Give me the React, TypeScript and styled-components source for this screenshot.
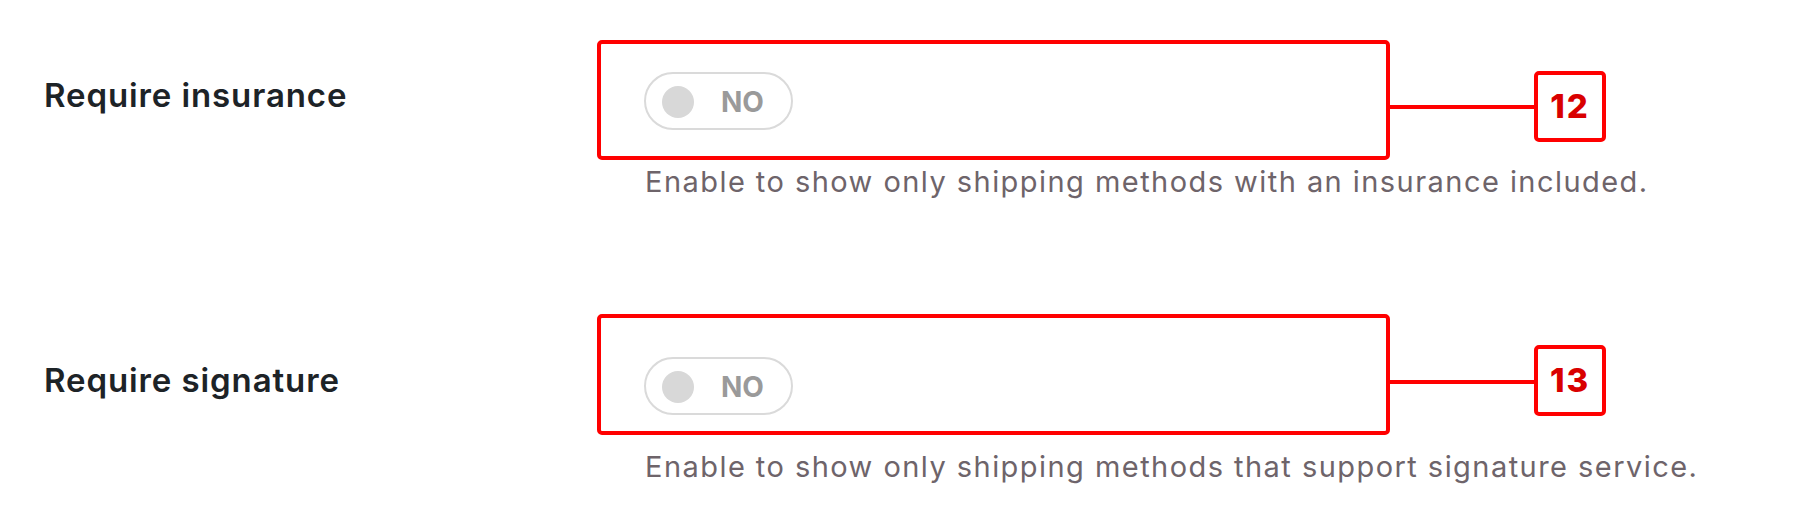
import React from 'react';
import styled, { createGlobalStyle } from 'styled-components';

const GlobalStyle = createGlobalStyle`
  html, body {
    margin: 0;
    padding: 0;
    background: #ffffff;
  }
  body {
    font-family: Inter, "Noto Sans", "Liberation Sans", sans-serif;
    -webkit-font-smoothing: antialiased;
  }
`;

const Page = styled.div`
  width: 1808px;
  height: 524px;
  box-sizing: border-box;
  padding: 72px 0 0 44px;
  display: flex;
  flex-direction: column;
  gap: 155px;
  overflow: hidden;
`;

const Row = styled.div`
  display: grid;
  grid-template-columns: 600px 1fr;
  align-items: start;
`;

const Label = styled.div`
  padding-top: 3px;
  font-size: 33px;
  line-height: 40px;
  font-weight: 600;
  letter-spacing: 0.9px;
  color: #1d2327;
`;

const Field = styled.div`
  display: flex;
  flex-direction: column;
  align-items: flex-start;
`;

const ToggleWrap = styled.div`
  position: relative;
`;

const Toggle = styled.div`
  box-sizing: border-box;
  width: 149px;
  height: 58px;
  border: 2px solid #dadada;
  border-radius: 29px;
  display: flex;
  align-items: center;
  padding-left: 16px;
  gap: 27px;
  background: #fff;
`;

const Knob = styled.span`
  width: 32px;
  height: 32px;
  border-radius: 50%;
  background: #d8d8d8;
  margin-top: 1px;
`;

const ToggleText = styled.span`
  font-size: 28px;
  font-weight: 700;
  color: #9a9a9a;
  line-height: 1;
  margin-top: 2px;
`;

const Description = styled.p`
  margin: 32px 0 0 1px;
  font-size: 29px;
  line-height: 40px;
  letter-spacing: 1.45px;
  color: #6e646a;
  white-space: nowrap;
`;

const Highlight = styled.div<{ $top: number; $height: number }>`
  position: absolute;
  left: -47px;
  top: ${p => p.$top}px;
  width: 793px;
  height: ${p => p.$height}px;
  box-sizing: border-box;
  border: 4px solid #ff0000;
  border-radius: 5px;
  pointer-events: none;
`;

const Connector = styled.div<{ $top: number }>`
  position: absolute;
  left: 746px;
  top: ${p => p.$top}px;
  width: 146px;
  height: 4px;
  background: #ff0000;
`;

const Badge = styled.div<{ $top: number }>`
  position: absolute;
  left: 890px;
  top: ${p => p.$top}px;
  width: 72px;
  height: 71px;
  box-sizing: border-box;
  border: 4px solid #ff0000;
  border-radius: 5px;
  background: #fff;
  display: flex;
  align-items: center;
  justify-content: center;
  font-size: 33px;
  font-weight: 800;
  letter-spacing: 2px;
  color: #d90000;
  line-height: 1;
`;

interface SettingProps {
  label: string;
  description: string;
  number: number;
  boxTop: number;
  boxHeight: number;
  lineTop: number;
  badgeTop: number;
}

const Setting: React.FC<SettingProps> = ({ label, description, number, boxTop, boxHeight, lineTop, badgeTop }) => (
  <Row>
    <Label>{label}</Label>
    <Field>
      <ToggleWrap>
        <Toggle>
          <Knob />
          <ToggleText>NO</ToggleText>
        </Toggle>
        <Highlight $top={boxTop} $height={boxHeight} />
        <Connector $top={lineTop} />
        <Badge $top={badgeTop}>{number}</Badge>
      </ToggleWrap>
      <Description>{description}</Description>
    </Field>
  </Row>
);

export default function App() {
  return (
    <>
      <GlobalStyle />
      <Page>
        <Setting
          label="Require insurance"
          description="Enable to show only shipping methods with an insurance included."
          number={12}
          boxTop={-32}
          boxHeight={120}
          lineTop={33}
          badgeTop={-1}
        />
        <Setting
          label="Require signature"
          description="Enable to show only shipping methods that support signature service."
          number={13}
          boxTop={-43}
          boxHeight={121}
          lineTop={23}
          badgeTop={-12}
        />
      </Page>
    </>
  );
}
